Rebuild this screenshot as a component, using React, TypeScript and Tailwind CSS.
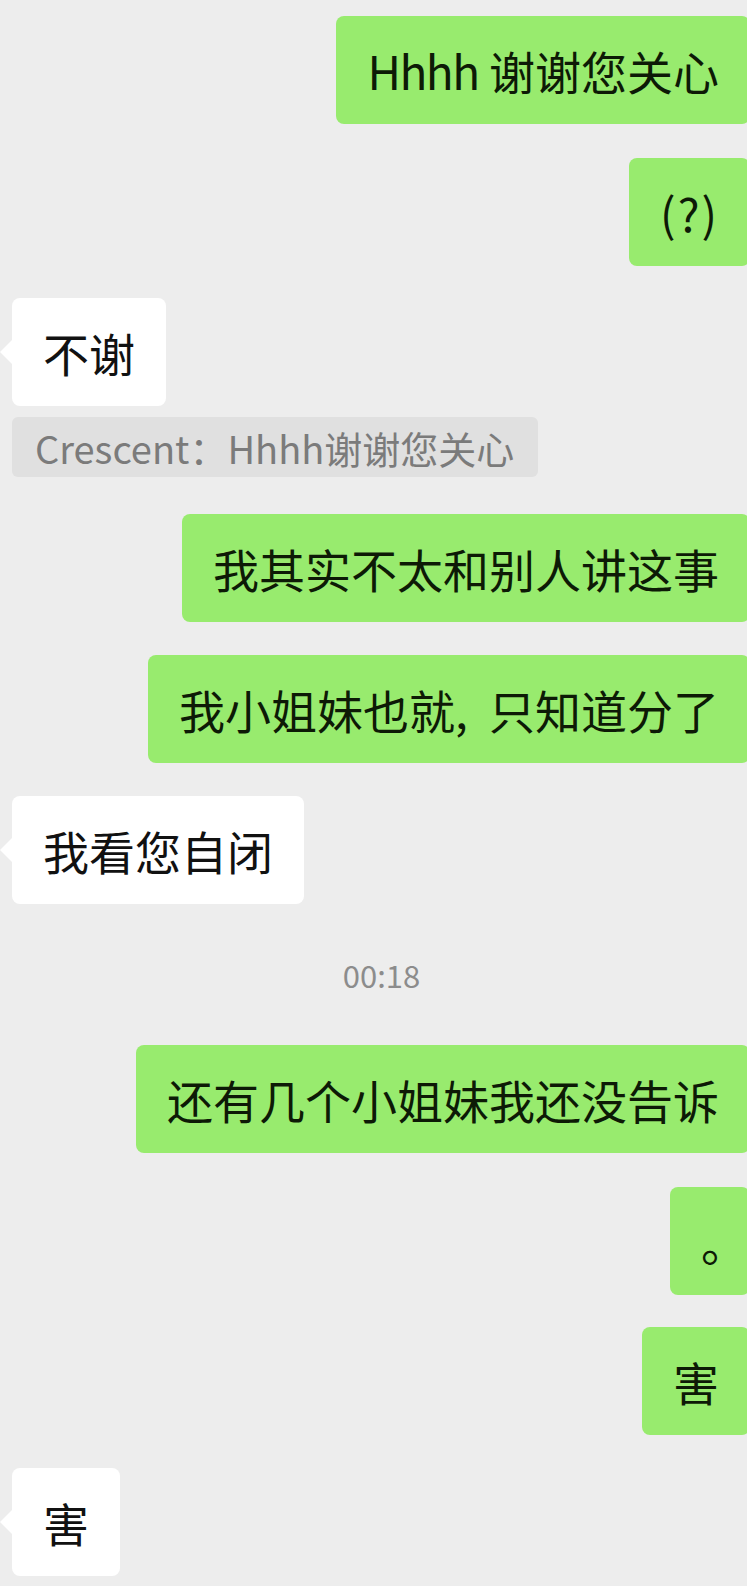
import React from "react";

type Msg = {
  kind: "me" | "them" | "quote" | "time";
  text: React.ReactNode;
  mt: string;
};

const messages: Msg[] = [
  {
    kind: "me",
    text: (
      <>
        <span className="tracking-[-1.5px]">Hhhh</span> 谢谢您关心
      </>
    ),
    mt: "mt-[16px]",
  },
  { kind: "me", text: <span className="tracking-[2px]">(?)</span>, mt: "mt-[34px]" },
  { kind: "them", text: "不谢", mt: "mt-[32px]" },
  { kind: "quote", text: "Crescent：Hhhh谢谢您关心", mt: "mt-[11px]" },
  { kind: "me", text: "我其实不太和别人讲这事", mt: "mt-[37px]" },
  {
    kind: "me",
    text: (
      <>
        我小姐妹也就<span className="inline-block w-[34px]">,</span>只知道分了
      </>
    ),
    mt: "mt-[33px]",
  },
  { kind: "them", text: "我看您自闭", mt: "mt-[33px]" },
  { kind: "time", text: "00:18", mt: "mt-[51px]" },
  { kind: "me", text: "还有几个小姐妹我还没告诉", mt: "mt-[50px]" },
  {
    kind: "me",
    text: <span className="inline-block w-[18px] overflow-visible">。</span>,
    mt: "mt-[34px]",
  },
  { kind: "me", text: "害", mt: "mt-[32px]" },
  { kind: "them", text: "害", mt: "mt-[33px]" },
];

const App: React.FC = () => {
  return (
    <div className="min-h-[1586px] w-full overflow-hidden bg-[#ededed] pb-[10px] font-['Noto_Sans_CJK_SC','Noto_Sans',sans-serif]">
      {messages.map((m, i) => {
        if (m.kind === "time") {
          return (
            <div
              key={i}
              className={`${m.mt} flex h-[40px] items-center justify-center pl-4 text-[31px] text-[#8c8c8c]`}
            >
              {m.text}
            </div>
          );
        }
        if (m.kind === "quote") {
          return (
            <div key={i} className={`${m.mt} flex px-[12px]`}>
              <div className="flex h-[60px] items-center whitespace-nowrap rounded-md bg-[#e0e0e0] pl-[23px] pr-[24px] text-[38px] text-[#7b7b7b]">
                {m.text}
              </div>
            </div>
          );
        }
        if (m.kind === "me") {
          return (
            <div key={i} className={`${m.mt} -mr-[3px] flex justify-end`}>
              <div className="flex h-[108px] items-center whitespace-nowrap rounded-lg bg-[#98eb6e] px-[31px] text-[46px] text-[#0d1a06]">
                <span>{m.text}</span>
              </div>
            </div>
          );
        }
        return (
          <div key={i} className={`${m.mt} flex pl-[12px]`}>
            <div className="relative flex h-[108px] items-center whitespace-nowrap rounded-lg bg-white px-[31px] text-[46px] text-[#111111]">
              <span className="absolute left-[-12px] top-[42px] h-0 w-0 border-y-[12px] border-r-[12px] border-y-transparent border-r-white" />
              <span>{m.text}</span>
            </div>
          </div>
        );
      })}
    </div>
  );
};

export default App;
